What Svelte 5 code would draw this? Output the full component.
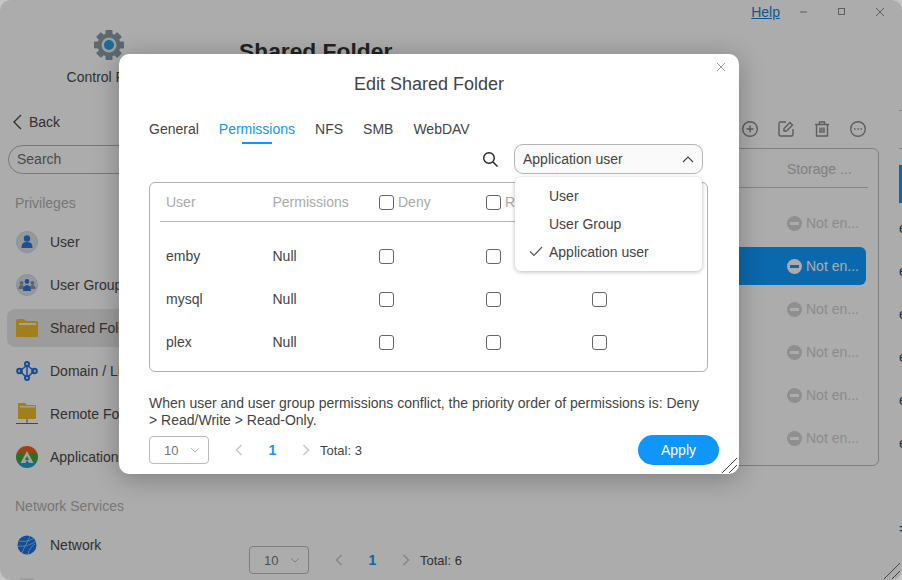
<script>
  const tabs = ["General", "Permissions", "NFS", "SMB", "WebDAV"];
  const users = ["emby", "mysql", "plex"];
  const options = ["User", "User Group", "Application user"];
  const statuses = [false, true, false, false, false, false];
  const strip = [0, 1, 2, 3, 4, 5];
  const teeth = [0, 45, 90, 135, 180, 225, 270, 315];
</script>

<div class="screen">
  <div class="window">
    <aside class="sidebar">
      <div class="brand">
        <svg width="32" height="32" viewBox="0 0 32 32">
          {#each teeth as t}
            <rect x="12.5" y="1" width="7" height="8" rx="1" fill="#8c9aa8" transform="rotate({t} 16 16)" />
          {/each}
          <circle cx="16" cy="16" r="11.5" fill="#8c9aa8" />
          <circle cx="16" cy="16" r="7.5" fill="#e8edf0" />
          <circle cx="16" cy="16" r="5" fill="#24a0e8" />
        </svg>
        <span>Control Panel</span>
      </div>
      <div class="back">
        <svg width="12" height="16" viewBox="0 0 12 16"><path d="M10 1 3 8l7 7" fill="none" stroke="#4a4a4a" stroke-width="1.4" /></svg>
        <span>Back</span>
      </div>
      <div class="search">Search</div>

      <h4>Privileges</h4>
      <div class="nav">
        <svg width="22" height="22" viewBox="0 0 22 22">
          <circle cx="11" cy="11" r="10.5" fill="#dde3ea" stroke="#cfd6de" />
          <circle cx="11" cy="7.5" r="3.2" fill="#2f74d8" />
          <path d="M5.5 17c0-4.5 2-6 5.5-6s5.500 1.500 5.500 6z" fill="#2f74d8" />
        </svg>
        <span>User</span>
      </div>
      <div class="nav">
        <svg width="22" height="22" viewBox="0 0 22 22">
          <circle cx="11" cy="11" r="10.500" fill="#dde3ea" stroke="#cfd6de" />
          <circle cx="5.500" cy="9" r="2" fill="#8795a8" />
          <circle cx="16.500" cy="9" r="2" fill="#8795a8" />
          <path d="M2.500 15c0-3 1-4 3-4s3 1 3 4zM13.500 15c0-3 1-4 3-4s3 1 3 4z" fill="#8795a8" />
          <circle cx="11" cy="7.500" r="2.400" fill="#2f74d8" />
          <path d="M7 17c0-4 1.500-6 4-6s4 2 4 6z" fill="#2f74d8" />
        </svg>
        <span>User Group</span>
      </div>
      <div class="nav selected">
        <svg width="22" height="20" viewBox="0 0 22 20">
          <path d="M0 3a2 2 0 0 1 2-2h6l2 2h10a2 2 0 0 1 2 2v13a1 1 0 0 1-1 1H1a1 1 0 0 1-1-1z" fill="#f0bc2c" />
          <rect x="3" y="5" width="17" height="2" fill="#f6efd8" />
        </svg>
        <span>Shared Folder</span>
      </div>
      <div class="nav">
        <svg width="22" height="20" viewBox="0 0 22 20" fill="none" stroke="#1d6fe0" stroke-width="2">
          <path d="M11 4v12M4 10l6-5M18 10l-6-5M4 10l6 6M18 10l-6 6" stroke-width="1.500" />
          <circle cx="11" cy="3" r="2" />
          <circle cx="11" cy="17" r="2" />
          <circle cx="3.500" cy="10" r="2.300" />
          <circle cx="18.500" cy="10" r="2.300" />
        </svg>
        <span>Domain / LDAP</span>
      </div>
      <div class="nav">
        <svg width="22" height="24" viewBox="0 0 22 24">
          <path d="M2 2a1 1 0 0 1 1-1h6l2 2h8a1 1 0 0 1 1 1v13H2z" fill="#f0bc2c" />
          <rect x="4" y="4" width="15" height="1.500" fill="#f6efd8" />
          <path d="M0 21.500h22M11 17v4.500" stroke="#6a6a6a" stroke-width="1" />
        </svg>
        <span>Remote Folder</span>
      </div>
      <div class="nav">
        <svg width="22" height="22" viewBox="0 0 22 22">
          <clipPath id="appclip"><circle cx="11" cy="11" r="11" /></clipPath>
          <g clip-path="url(#appclip)">
            <rect width="22" height="7" fill="#e8641c" />
            <rect y="7" width="22" height="8" fill="#3fa83a" />
            <rect y="15" width="22" height="7" fill="#1fa0c8" />
          </g>
          <path d="M11 5 4.500 17h5l1.500-3 2 3h4.500zM11 10l2 4h-4z" fill="#eef2f2" fill-rule="evenodd" />
        </svg>
        <span>Application</span>
      </div>

      <h4 class="second">Network Services</h4>
      <div class="nav">
        <svg width="22" height="20" viewBox="0 0 22 20">
          <circle cx="11" cy="10" r="9.500" fill="#1d74e8" />
          <path d="M3 6c5 1 11 0 15-3M2 11c6 1 13-1 18-5M6 18c2-6 6-11 8-17M12 19c1-5 4-8 7-10" fill="none" stroke="#a9cdf5" stroke-width=".8" />
        </svg>
        <span>Network</span>
      </div>
      <div class="nav">
        <svg width="22" height="20" viewBox="0 0 22 20">
          <rect x="4" y="1" width="14" height="18" rx="1" fill="#f2f2f2" stroke="#dcdcdc" />
        </svg>
        <span></span>
      </div>
    </aside>

    <main class="content">
      <h1>Shared Folder</h1>
      <div class="toolbar">
        <svg width="18" height="18" viewBox="0 0 18 18" fill="none" stroke="#8a8a8a" stroke-width="1.400">
          <circle cx="9" cy="9" r="7.300" />
          <path d="M9 5.500v7M5.500 9h7" />
        </svg>
        <svg width="18" height="18" viewBox="0 0 18 18" fill="none" stroke="#8a8a8a" stroke-width="1.400">
          <path d="M9 2H3.500A1.500 1.500 0 0 0 2 3.500v11A1.500 1.500 0 0 0 3.500 16h11a1.500 1.500 0 0 0 1.500-1.500V9" />
          <path d="M7 11V8.500l6-6 2.500 2.500-6 6z" />
        </svg>
        <svg width="18" height="18" viewBox="0 0 18 18" fill="none" stroke="#8a8a8a" stroke-width="1.400">
          <path d="M2 4.500h14M6.500 4V2h5v2M3.500 4.500V16h11V4.500M7 7.500V13M9 7.500V13M11 7.500V13" />
        </svg>
        <svg width="18" height="18" viewBox="0 0 18 18" fill="none" stroke="#8a8a8a" stroke-width="1.400">
          <circle cx="9" cy="9" r="7.300" />
          <path d="M5 9h1.500M8.300 9h1.500M11.500 9H13" stroke-width="1.600" />
        </svg>
      </div>
      <div class="folders">
        <div class="folders-head"><span>Storage ...</span></div>
        {#each statuses as active}
          <div class="folder" class:active>
            <span class="minus"></span>
            <span>Not en...</span>
          </div>
        {/each}
      </div>
      <div class="pager">
        <div class="size">10
          <svg width="10" height="6" viewBox="0 0 10 6"><path d="m1 1 4 4 4-4" fill="none" stroke="#bbb" /></svg>
        </div>
        <svg class="pg-left" width="8" height="12" viewBox="0 0 8 12"><path d="M6.500 1 1.500 6l5 5" fill="none" stroke="#c4cad2" stroke-width="1.600" /></svg>
        <b>1</b>
        <svg class="pg-right" width="8" height="12" viewBox="0 0 8 12"><path d="m1.500 1 5 5-5 5" fill="none" stroke="#c4cad2" stroke-width="1.600" /></svg>
        <span>Total: 6</span>
      </div>
    </main>

    <div class="strip">
      <div class="strip-line first"></div>
      <div class="strip-line"></div>
      <div class="strip-top"></div>
      {#each strip as i}
        <div class="strip-row">e</div>
      {/each}
      <div class="strip-last">=</div>
    </div>

    <div class="topbar">
      <a href="#help">Help</a>
      <svg width="12" height="12" viewBox="0 0 12 12"><path d="M2 6h7" stroke="#8c8c8c" /></svg>
      <svg width="12" height="12" viewBox="0 0 12 12"><rect x="2.500" y="2.500" width="6" height="6" fill="none" stroke="#8c8c8c" /></svg>
      <svg width="12" height="12" viewBox="0 0 12 12"><path d="m2 2 8 8M10 2l-8 8" stroke="#8c8c8c" /></svg>
    </div>
  </div>

  <div class="scrim"></div>
  <svg class="grip window-grip" width="18" height="18" viewBox="0 0 18 18"><path d="M1 17 17 1M9 17l8-8" stroke="#444" stroke-width="1" /></svg>

  <section class="modal">
    <svg class="close" width="10" height="10" viewBox="0 0 10 10"><path d="m1 1 8 8M9 1 1 9" stroke="#999" /></svg>
    <h2>Edit Shared Folder</h2>
    <nav class="tabs">
      {#each tabs as tab}
        <span class="tab" class:on={tab === "Permissions"}>{tab}</span>
      {/each}
    </nav>
    <div class="filter">
      <svg width="17" height="17" viewBox="0 0 17 17" fill="none" stroke="#222" stroke-width="1.400">
        <circle cx="7" cy="7" r="5.300" />
        <path d="m11 11 4.500 4.500" />
      </svg>
      <div class="picker">
        <span>Application user</span>
        <svg width="12" height="7" viewBox="0 0 12 7"><path d="m1 6 5-5 5 5" fill="none" stroke="#444" stroke-width="1.100" /></svg>
      </div>
    </div>

    <div class="perms">
      <div class="perm-head">
        <span>User</span>
        <span>Permissions</span>
        <span class="with-box"><input type="checkbox" />Deny</span>
        <span class="with-box"><input type="checkbox" />R</span>
        <span class="with-box"><input type="checkbox" /></span>
      </div>
      {#each users as user}
        <div class="perm-row">
          <span>{user}</span>
          <span>Null</span>
          <span><input type="checkbox" /></span>
          <span><input type="checkbox" /></span>
          <span><input type="checkbox" /></span>
        </div>
      {/each}
    </div>

    <p class="note">When user and user group permissions conflict, the priority order of permissions is: Deny &gt; Read/Write &gt; Read-Only.</p>

    <div class="modal-foot">
      <div class="size">10
        <svg width="10" height="6" viewBox="0 0 10 6"><path d="m1 1 4 4 4-4" fill="none" stroke="#bbb" /></svg>
      </div>
      <svg class="pg-left" width="8" height="12" viewBox="0 0 8 12"><path d="M6.500 1 1.500 6l5 5" fill="none" stroke="#c4cad2" stroke-width="1.600" /></svg>
      <b>1</b>
      <svg class="pg-right" width="8" height="12" viewBox="0 0 8 12"><path d="m1.500 1 5 5-5 5" fill="none" stroke="#c4cad2" stroke-width="1.600" /></svg>
      <span>Total: 3</span>
      <button>Apply</button>
    </div>

    <ul class="menu">
      {#each options as option}
        <li>
          {#if option === "Application user"}
            <svg width="14" height="11" viewBox="0 0 14 11"><path d="m1 5.500 4 4 8-8.500" fill="none" stroke="#555" stroke-width="1.100" /></svg>
          {/if}
          {option}
        </li>
      {/each}
    </ul>
    <svg class="grip" width="17" height="17" viewBox="0 0 17 17"><path d="M1 16 16 1M8 16l8-8" stroke="#444" stroke-width="1" /></svg>
  </section>
</div>

<style>
  :global(body) {
    margin: 0;
    background: #c6c6c6;
  }

  .screen {
    position: relative;
    width: 902px;
    height: 580px;
    overflow: hidden;
    font-family: "Liberation Sans", Arial, sans-serif;
    font-size: 14px;
    color: #4a4a4a;
  }

  .window {
    display: flex;
    width: 902px;
    height: 580px;
    box-sizing: border-box;
    background: #fff;
    border-radius: 10px;
    overflow: hidden;
    position: relative;
  }

  .scrim {
    position: absolute;
    inset: 0;
    background: rgba(0, 0, 0, 0.325);
    border-radius: 10px;
  }

  .sidebar {
    width: 226px;
    flex: none;
    padding-top: 29px;
    box-sizing: border-box;
  }

  .brand {
    display: flex;
    flex-direction: column;
    align-items: center;
    gap: 8px;
    width: 218px;
    height: 75px;
    line-height: 16px;
  }

  .back {
    display: flex;
    align-items: center;
    gap: 6px;
    margin: 9px 0 0 11px;
    height: 18px;
  }

  .search {
    margin: 14px 0 0 8px;
    width: 200px;
    height: 29px;
    line-height: 27px;
    box-sizing: border-box;
    border: 1px solid #b4b4b4;
    border-radius: 15px;
    padding-left: 8px;
    color: #6e6e6e;
  }

  h4 {
    margin: 20px 0 0 15px;
    font-weight: normal;
    font-size: 14px;
    line-height: 18px;
    color: #b0b0b0;
  }

  h4.second {
    margin-top: 21px;
    margin-bottom: 0;
  }

  .nav {
    display: flex;
    align-items: center;
    gap: 12px;
    height: 38px;
    margin: 5px 8px 0 7px;
    padding-left: 9px;
    border-radius: 8px;
  }

  h4 + .nav {
    margin-top: 11px;
  }

  .nav.selected {
    background: #e8e8e8;
  }

  .nav svg {
    flex: none;
  }

  .content {
    flex: 1;
    min-width: 0;
    padding: 0 20px 0 13px;
    box-sizing: border-box;
  }

  h1 {
    margin: 38px 0 0;
    font-size: 22.800px;
    line-height: 26px;
    color: #333;
  }

  .toolbar {
    display: flex;
    justify-content: flex-end;
    gap: 18px;
    margin: 56px 12px 0 0;
    height: 18px;
  }

  .folders {
    margin: 10px 0 0 218px;
    height: 318px;
    box-sizing: border-box;
    border: 1px solid #bdbdbd;
    border-radius: 6px;
    padding: 0 12px 0 0;
  }

  .folders-head {
    height: 38px;
    line-height: 41px;
    padding-left: 329px;
    margin-right: -2px;
    border-bottom: 1px solid #c4c4c4;
    color: #bdbdbd;
    margin-bottom: 16px;
  }

  .folder {
    display: flex;
    align-items: center;
    gap: 4px;
    height: 38px;
    margin-bottom: 5px;
    padding-left: 329px;
    border-radius: 0 6px 6px 0;
    color: #cfcfcf;
  }

  .folder.active {
    background: #0f9bff;
    color: #fff;
    box-sizing: border-box;
  }

  .minus {
    position: relative;
    width: 15px;
    height: 15px;
    border-radius: 50%;
    background: #d4d4d4;
  }

  .minus::after {
    content: "";
    position: absolute;
    left: 3px;
    right: 3px;
    top: 6px;
    height: 3px;
    background: #fff;
  }

  .active .minus {
    background: #fff;
  }

  .active .minus::after {
    background: #0f9bff;
  }

  .pager {
    display: flex;
    align-items: center;
    margin-top: 80px;
    margin-left: 10px;
    height: 28px;
    font-size: 13px;
  }

  .size {
    display: flex;
    align-items: center;
    justify-content: space-between;
    box-sizing: border-box;
    width: 60px;
    height: 28px;
    padding: 0 8px 0 14px;
    border: 1px solid #bbb;
    border-radius: 4px;
    color: #777;
    font-size: 13px;
  }

  .pg-left {
    margin-left: 26px;
  }

  .pg-right {
    margin-right: 10px;
  }

  .pager b,
  .modal-foot b {
    width: 59px;
    text-align: center;
    color: #1296f9;
    font-size: 14px;
  }

  .strip {
    width: 3px;
    flex: none;
    overflow: hidden;
    color: #3a4a58;
    line-height: 43px;
    position: relative;
  }

  .strip-line {
    height: 37px;
    border-top: 1px solid #c0c0c0;
  }

  .strip-line.first {
    margin-top: 110px;
  }

  .strip-top {
    margin-top: -21px;
    height: 38px;
    width: 20px;
    background: #0f9bff;
    margin-bottom: 4px;
  }

  .strip-row {
    height: 43px;
  }

  .strip-last {
    margin-top: 43px;
  }

  .topbar {
    position: absolute;
    top: 3px;
    right: 16px;
    display: flex;
    align-items: center;
    gap: 26px;
    height: 18px;
  }

  .topbar a {
    color: #1580d8;
    margin-right: -9px;
  }

  .topbar svg:first-of-type {
    margin-left: 1px;
  }

  .modal {
    position: absolute;
    left: 119px;
    top: 54px;
    width: 620px;
    height: 420px;
    box-sizing: border-box;
    padding: 18px 30px 0;
    background: #fff;
    border-radius: 10px;
    box-shadow: 0 4px 26px rgba(0, 0, 0, 0.28);
    color: #444;
  }

  .close {
    position: absolute;
    right: 13px;
    top: 8px;
  }

  h2 {
    margin: 0;
    font-size: 18px;
    font-weight: normal;
    line-height: 24px;
    text-align: center;
  }

  .tabs {
    display: flex;
    gap: 20px;
    margin-top: 22px;
    height: 26px;
    line-height: 22px;
  }

  .tab {
    position: relative;
  }

  .tab.on {
    color: #1296f9;
  }

  .tab.on::after {
    content: "";
    position: absolute;
    left: 23px;
    width: 30px;
    bottom: 0;
    height: 2px;
    background: #1296f9;
  }

  .filter {
    display: flex;
    align-items: center;
    justify-content: flex-end;
    gap: 15px;
    padding-right: 6px;
    height: 30px;
  }

  .picker {
    display: flex;
    align-items: center;
    justify-content: space-between;
    box-sizing: border-box;
    width: 189px;
    height: 30px;
    padding: 0 8px 0 8px;
    background: #fafafa;
    border: 1px solid #b4b4b4;
    border-radius: 9px;
  }

  .perms {
    margin-top: 8px;
    width: 559px;
    height: 190px;
    box-sizing: border-box;
    border: 1px solid #b0b0b0;
    border-radius: 6px;
    padding: 0 8px 0 10px;
  }

  .perm-head,
  .perm-row {
    display: grid;
    grid-template-columns: 106.500px 106.500px 107px 106px 1fr;
    align-items: center;
    padding-left: 6px;
    white-space: nowrap;
  }

  .perm-head {
    height: 38px;
    border-bottom: 1px solid #b4b4b4;
    color: #aaa;
    margin-bottom: 12px;
  }

  .perm-row {
    height: 43px;
  }

  .perm-row span:nth-child(n + 3),
  .with-box {
    display: flex;
    align-items: center;
  }

  input[type="checkbox"] {
    appearance: none;
    width: 15px;
    height: 15px;
    margin: 0;
    background: #fff;
    border: 1px solid #666;
    border-radius: 3px;
  }

  .perm-row input[type="checkbox"] {
    margin-top: 2px;
  }

  .with-box input[type="checkbox"] {
    margin-right: 4px;
  }

  .note {
    margin: 23px 0 0;
    width: 559px;
    line-height: 17px;
  }

  .modal-foot {
    display: flex;
    align-items: center;
    height: 30px;
    margin-top: 6px;
    font-size: 13px;
  }

  .modal-foot .pg-left {
    margin-left: 26px;
  }

  button {
    margin-left: auto;
    margin-right: -10px;
    width: 81px;
    height: 30px;
    border: none;
    border-radius: 15px;
    background: #0f96fa;
    color: #fff;
    font: inherit;
    font-size: 14px;
  }

  .menu {
    position: absolute;
    left: 396px;
    top: 123px;
    width: 187px;
    height: 94px;
    box-sizing: border-box;
    margin: 0;
    padding: 5px 0 0 34px;
    list-style: none;
    background: #fff;
    border-radius: 6px;
    box-shadow: 0 1px 4px rgba(0, 0, 0, 0.28);
  }

  .menu li {
    position: relative;
    height: 28px;
    line-height: 28px;
  }

  .menu svg {
    position: absolute;
    left: -20px;
    top: 8px;
  }

  .grip {
    position: absolute;
    right: 1px;
    bottom: 0;
  }
</style>
